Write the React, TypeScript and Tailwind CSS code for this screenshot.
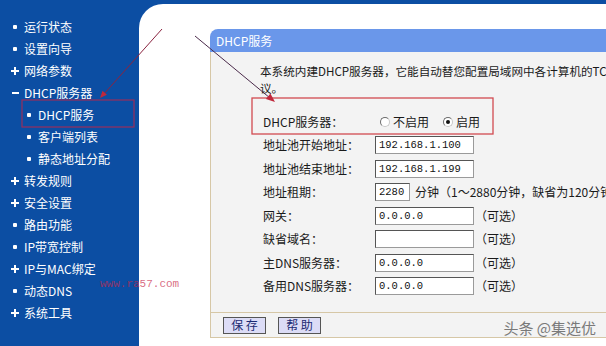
import React from "react";

type Mark = "dot" | "plus" | "minus";

const menu: { label: string; mark: Mark; sub?: boolean }[] = [
  { label: "运行状态", mark: "dot" },
  { label: "设置向导", mark: "dot" },
  { label: "网络参数", mark: "plus" },
  { label: "DHCP服务器", mark: "minus" },
  { label: "DHCP服务", mark: "dot", sub: true },
  { label: "客户端列表", mark: "dot", sub: true },
  { label: "静态地址分配", mark: "dot", sub: true },
  { label: "转发规则", mark: "plus" },
  { label: "安全设置", mark: "plus" },
  { label: "路由功能", mark: "dot" },
  { label: "IP带宽控制", mark: "dot" },
  { label: "IP与MAC绑定", mark: "plus" },
  { label: "动态DNS", mark: "dot" },
  { label: "系统工具", mark: "plus" },
];

const MenuMark = ({ mark }: { mark: Mark }) => (
  <span className="w-[10px] h-[10px] flex items-center justify-center shrink-0">
    {mark === "dot" && <span className="w-[4px] h-[4px] bg-white rounded-[1px]" />}
    {mark === "minus" && <span className="w-[7px] h-[2px] bg-white" />}
    {mark === "plus" && (
      <svg width="8" height="8" viewBox="0 0 8 8">
        <rect x="3" y="0" width="2" height="8" fill="#fff" />
        <rect x="0" y="3" width="8" height="2" fill="#fff" />
      </svg>
    )}
  </span>
);

const Radio = ({ on }: { on?: boolean }) => (
  <span className="w-[10px] h-[10px] rounded-full border border-[#6b6b6b] border-r-[#c8c8c8] border-b-[#c8c8c8] bg-white flex items-center justify-center">
    {on && <span className="w-[4px] h-[4px] rounded-full bg-[#111]" />}
  </span>
);

const Field = ({ value, w = "w-[99px]" }: { value: string; w?: string }) => (
  <input
    readOnly
    value={value}
    className={`${w} h-[18px] border border-[#555] border-r-[#9a9a9a] border-b-[#9a9a9a] bg-white pl-[3px] text-[10.5px] text-[#111] font-['Liberation_Mono',monospace] outline-none`}
  />
);

const rows = [
  { label: "地址池开始地址：", value: "192.168.1.100" },
  { label: "地址池结束地址：", value: "192.168.1.199" },
];

const optionalRows = [
  { label: "网关：", value: "0.0.0.0" },
  { label: "缺省域名：", value: "" },
  { label: "主DNS服务器：", value: "0.0.0.0" },
  { label: "备用DNS服务器：", value: "0.0.0.0" },
];

export default function App() {
  return (
    <div className="relative w-[606px] h-[346px] overflow-hidden bg-[#0c4ea3] flex font-['Noto_Sans_CJK_SC',sans-serif] text-[12px]">
      {/* sidebar */}
      <div className="w-[139px] shrink-0 pt-[16px] text-white">
        {menu.map((m) => (
          <div
            key={m.label}
            className={`h-[22px] flex items-center gap-[4px] whitespace-nowrap ${m.sub ? "pl-[24px]" : "pl-[10px]"}`}
          >
            <MenuMark mark={m.mark} />
            <span className="leading-none">{m.label}</span>
          </div>
        ))}
      </div>

      {/* content */}
      <div className="flex-1 mt-[4px] bg-white rounded-tl-[24px] pl-[71px] pt-[25px]">
        <div className="w-[430px]">
          <div className="h-[23px] bg-[#6a97ea] rounded-tl-[8px] text-white pl-[6px] flex items-center">
            DHCP服务
          </div>
          <div className="bg-[#f3f3f3] border-l border-[#d6c7a6] pl-[49px] pt-[11px] pb-[14px] text-[#1a1a1a]">
            <p className="text-[11.6px] leading-[17px] whitespace-nowrap">
              本系统内建DHCP服务器，它能自动替您配置局域网中各计算机的TCP/IP协
              <br />
              议。
            </p>
            <div className="mt-[13px] pl-[3px]">
              <div className="h-[23.5px] flex items-center">
                <span className="w-[112px]">DHCP服务器：</span>
                <span className="ml-[5px] flex items-center gap-[3px]">
                  <Radio />
                  不启用
                </span>
                <span className="ml-[14px] flex items-center gap-[3px]">
                  <Radio on />
                  启用
                </span>
              </div>
              {rows.map((r) => (
                <div key={r.label} className="h-[23.5px] flex items-center">
                  <span className="w-[112px]">{r.label}</span>
                  <Field value={r.value} />
                </div>
              ))}
              <div className="h-[23.5px] flex items-center whitespace-nowrap">
                <span className="w-[112px]">地址租期：</span>
                <Field value="2280" w="w-[35px]" />
                <span className="ml-[5px]">分钟（1～2880分钟，缺省为120分钟）</span>
              </div>
              {optionalRows.map((r) => (
                <div key={r.label} className="h-[23.5px] flex items-center">
                  <span className="w-[112px]">{r.label}</span>
                  <Field value={r.value} />
                  <span className="ml-[1px]">（可选）</span>
                </div>
              ))}
            </div>
          </div>
          <div className="h-[26px] bg-[#f3f3f3] border border-r-0 border-[#d6c7a6] pl-[12px] flex items-center gap-[12px]">
            <button className="h-[17px] w-[43px] border border-[#555] bg-[#dcdcf6] text-[#1b2a72] text-[12px] leading-none">
              保 存
            </button>
            <button className="h-[17px] w-[43px] border border-[#555] bg-[#dcdcf6] text-[#1b2a72] text-[12px] leading-none">
              帮 助
            </button>
          </div>
        </div>
      </div>

      {/* watermarks */}
      <span className="absolute left-[100px] top-[276px] text-[11px] font-['Liberation_Mono',monospace] text-[#c8284a]/70">
        www.ra57.com
      </span>
      <span className="absolute right-[10px] top-[317px] text-[15px] text-[#7a7a7a]">
        头条 @集选优
      </span>

      {/* annotations */}
      <svg className="absolute inset-0 pointer-events-none" width="606" height="346">
        <rect x="22" y="100" width="112" height="27" fill="none" stroke="#9a2d5c" strokeWidth="1.2" />
        <rect x="252" y="98" width="241" height="36" fill="none" stroke="#d24a50" strokeWidth="1.3" />
        <line x1="162" y1="29" x2="103" y2="95" stroke="#8a2440" strokeWidth="1" />
        <polygon points="100,98 106.9,94.8 102.5,90.8" fill="#c0283c" />
        <line x1="195" y1="36" x2="270" y2="98" stroke="#4a2a4a" strokeWidth="1" />
        <polygon points="275,102 265.9,98.9 270.4,93.5" fill="#c0283c" />
      </svg>
    </div>
  );
}
